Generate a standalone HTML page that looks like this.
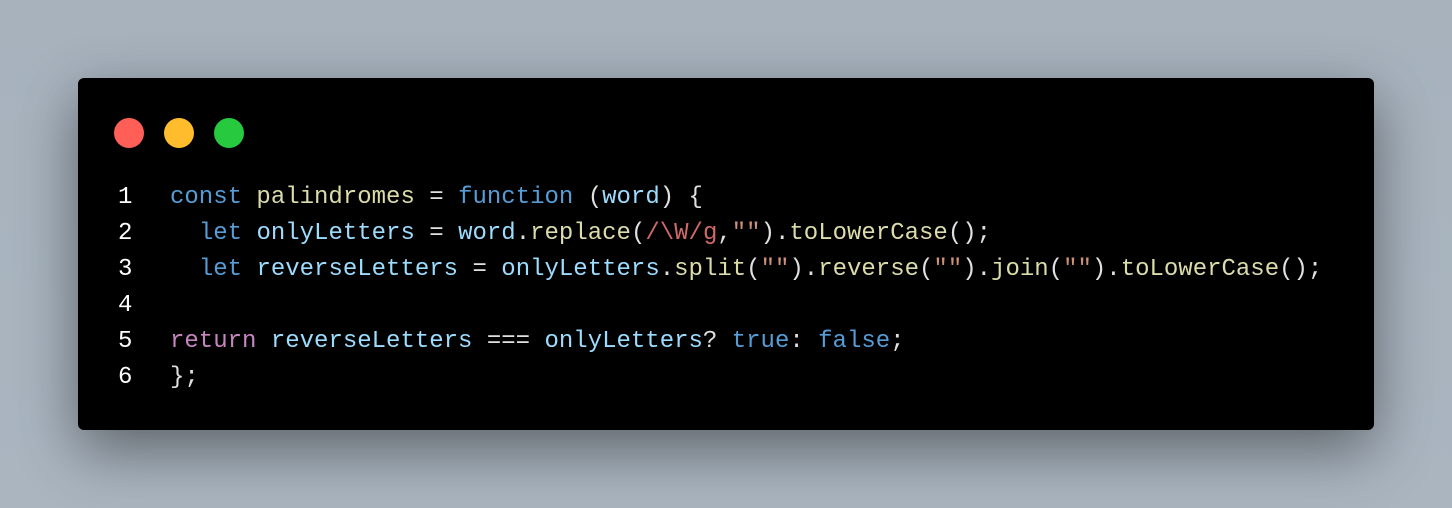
<!DOCTYPE html>
<html><head><style>
html,body{margin:0;padding:0;}
body{width:1452px;height:508px;background:linear-gradient(180deg,#a7b2bd,#aab5c0);position:relative;overflow:hidden;font-family:"Liberation Mono",monospace;}
.win{position:absolute;left:78px;top:78px;width:1296px;height:352px;background:#000;border-radius:6px;box-shadow:0 20px 60px rgba(0,0,0,0.45);}
.dot{position:absolute;top:40px;width:30px;height:30px;border-radius:50%;}
.code{position:absolute;left:0;top:102px;font-size:24px;line-height:36px;color:#e0e0e0;white-space:pre;}
.ln{position:absolute;top:0;left:40px;color:#fff;}
.tx{position:absolute;top:0;left:92px;}
.k{color:#569cd6}.f{color:#dcdcaa}.v{color:#9cdcfe}.s{color:#ce9178}.c{color:#c586c0}.r{color:#d16969}
</style></head><body>
<div class="win">
<div class="dot" style="left:36px;background:#ff5f56"></div>
<div class="dot" style="left:86px;background:#ffbd2e"></div>
<div class="dot" style="left:136px;background:#27c93f"></div>
<div class="code"><div class="ln">1
2
3
4
5
6</div><div class="tx"><span class="k">const</span> <span class="f">palindromes</span> = <span class="k">function</span> (<span class="v">word</span>) {
  <span class="k">let</span> <span class="v">onlyLetters</span> = <span class="v">word</span>.<span class="f">replace</span>(<span class="r">/\W/g</span>,<span class="s">""</span>).<span class="f">toLowerCase</span>();
  <span class="k">let</span> <span class="v">reverseLetters</span> = <span class="v">onlyLetters</span>.<span class="f">split</span>(<span class="s">""</span>).<span class="f">reverse</span>(<span class="s">""</span>).<span class="f">join</span>(<span class="s">""</span>).<span class="f">toLowerCase</span>();

<span class="c">return</span> <span class="v">reverseLetters</span> === <span class="v">onlyLetters</span>? <span class="k">true</span>: <span class="k">false</span>;
};</div></div>
</div>
</body></html>
